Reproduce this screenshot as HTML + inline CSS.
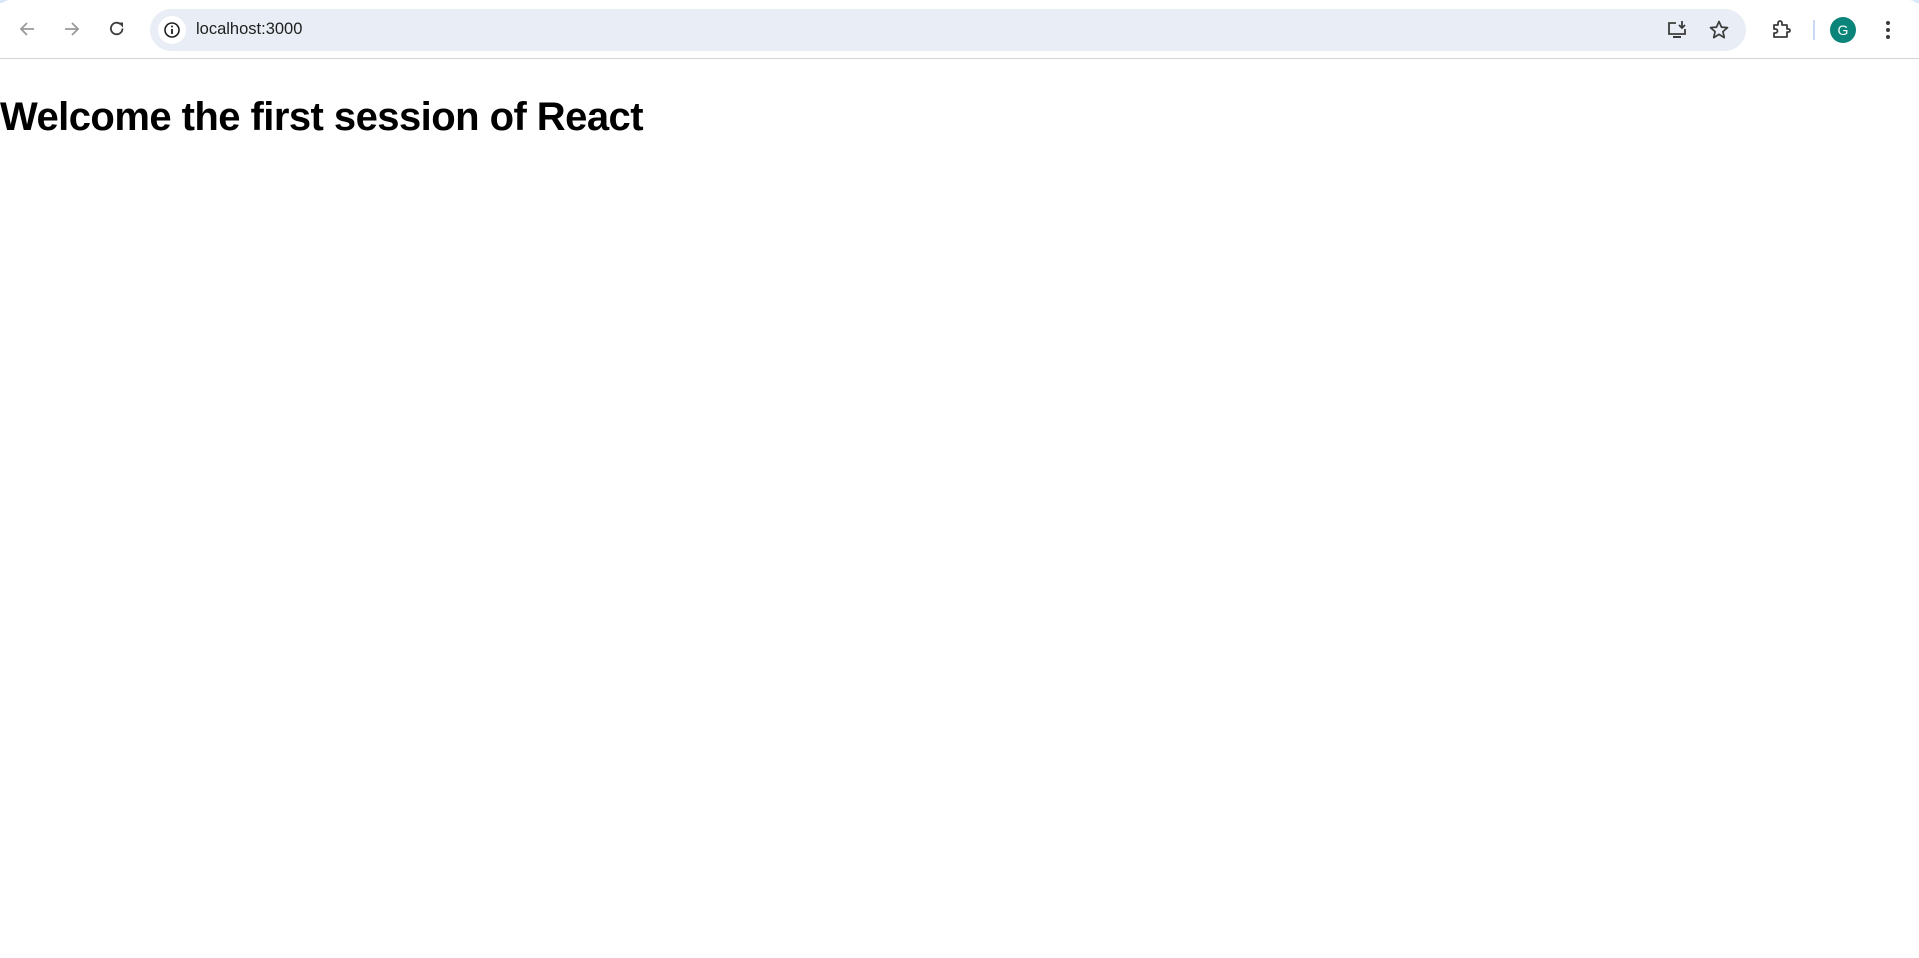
<!DOCTYPE html>
<html><head><style>
html,body{margin:0;padding:0;width:1919px;height:958px;background:#fff;overflow:hidden;font-family:"Liberation Sans",sans-serif}
.top{position:absolute;left:0;top:0;width:1919px;height:3px;background:#dbe6f8}
.top2{position:absolute;left:0;top:0;width:1919px;height:58px;background:#fff;border-radius:10px 10px 0 0}
.bar{position:absolute;left:0;top:58px;width:1919px;height:1px;background:#d3d3d3}
.addr{position:absolute;left:150px;top:9px;width:1596px;height:42px;border-radius:21px;background:#e9eef6}
.url{position:absolute;left:196px;top:20px;font-size:16.5px;color:#1f1f1f}
.infoc{position:absolute;left:158px;top:16px;width:28px;height:28px;border-radius:50%;background:#fff}
svg{position:absolute}
h1{position:absolute;left:0;top:95px;margin:0;font-size:40px;font-weight:bold;color:#000;letter-spacing:-0.55px}
.av{position:absolute;left:1830px;top:17px;width:26px;height:26px;border-radius:50%;background:#0b8579;color:#fff;font-size:14px;text-align:center;line-height:26px}
</style></head><body>
<div class="top"></div><div class="top2"></div><div class="bar"></div>
<svg style="left:17px;top:19px" width="20" height="20" viewBox="0 0 20 20"><path d="M17 10H4M10 4L4 10l6 6" stroke="#9a9a9a" stroke-width="1.8" fill="none"/></svg>
<svg style="left:62px;top:19px" width="20" height="20" viewBox="0 0 20 20"><path d="M3 10h13M10 4l6 6-6 6" stroke="#9a9a9a" stroke-width="1.8" fill="none"/></svg>
<svg style="left:107px;top:19px" width="20" height="20" viewBox="0 0 20 20"><path d="M15.5 9.5A5.8 5.8 0 1 1 13.6 5.2" stroke="#3c3c3c" stroke-width="1.8" fill="none"/><path d="M11 3.5h5v5z" fill="#3c3c3c"/></svg>
<div class="addr"></div><div class="infoc"></div>
<svg style="left:162px;top:20px" width="20" height="20" viewBox="0 0 20 20"><circle cx="10" cy="10" r="7" stroke="#1f1f1f" stroke-width="1.6" fill="none"/><path d="M10 9v5" stroke="#1f1f1f" stroke-width="1.8"/><circle cx="10" cy="6.5" r="1" fill="#1f1f1f"/></svg>
<div class="url">localhost:3000</div>
<svg style="left:1666px;top:18px" width="24" height="24" viewBox="0 0 24 24"><path d="M10 5H3v11h16v-5" stroke="#3c3c3c" stroke-width="1.8" fill="none"/><path d="M7 19h8" stroke="#3c3c3c" stroke-width="2"/><path d="M16 3v7M13 7l3 3 3-3" stroke="#3c3c3c" stroke-width="1.8" fill="none"/></svg>
<svg style="left:1707px;top:18px" width="24" height="24" viewBox="0 0 24 24"><path d="M12 3.5l2.5 5.6 6 .5-4.6 4 1.4 6L12 16.4 6.7 19.6l1.4-6-4.6-4 6-.5z" stroke="#3c3c3c" stroke-width="1.7" fill="none" stroke-linejoin="round"/></svg>
<svg style="left:1769px;top:18px" width="24" height="24" viewBox="0 0 24 24"><path d="M5 7h4V5a2 2 0 0 1 4 0v2h5v4h1.5a1.5 1.5 0 0 1 0 3H18v5H5v-4h1.5a2 2 0 0 0 0-4H5z" stroke="#3c3c3c" stroke-width="1.8" fill="none" stroke-linejoin="round"/></svg>
<div style="position:absolute;left:1813px;top:20px;width:2px;height:20px;background:#c9d9f3"></div>
<div class="av">G</div>
<svg style="left:1878px;top:18px" width="20" height="24" viewBox="0 0 20 24"><circle cx="10" cy="5" r="2" fill="#3c3c3c"/><circle cx="10" cy="12" r="2" fill="#3c3c3c"/><circle cx="10" cy="19" r="2" fill="#3c3c3c"/></svg>
<h1>Welcome the first session of React</h1>
</body></html>
